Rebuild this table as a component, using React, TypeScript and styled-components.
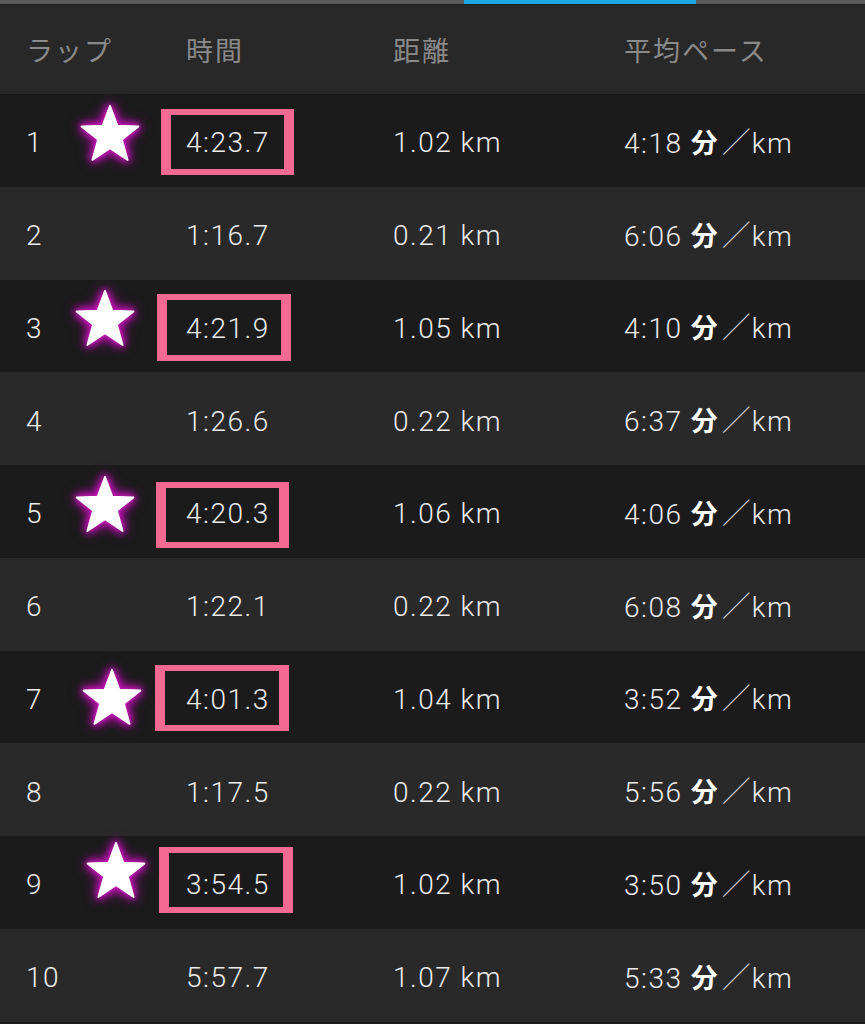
import React from "react";
import styled, { createGlobalStyle } from "styled-components";

const GlobalStyle = createGlobalStyle`
  body {
    margin: 0;
    background: #1b1b1b;
    font-family: Roboto, "Noto Sans CJK JP", sans-serif;
  }
`;

type Mark = {
  starX: number;
  starY: number;
  boxX: number;
  boxY: number;
  boxW: number;
  boxH: number;
};

type Lap = {
  lap: number;
  time: string;
  distance: string;
  pace: string;
  mark?: Mark;
};

const laps: Lap[] = [
  { lap: 1, time: "4:23.7", distance: "1.02 km", pace: "4:18", mark: { starX: 80, starY: 10, boxX: 161, boxY: 15, boxW: 133, boxH: 66 } },
  { lap: 2, time: "1:16.7", distance: "0.21 km", pace: "6:06" },
  { lap: 3, time: "4:21.9", distance: "1.05 km", pace: "4:10", mark: { starX: 75, starY: 9, boxX: 157, boxY: 14, boxW: 134, boxH: 67 } },
  { lap: 4, time: "1:26.6", distance: "0.22 km", pace: "6:37" },
  { lap: 5, time: "4:20.3", distance: "1.06 km", pace: "4:06", mark: { starX: 75, starY: 10, boxX: 156, boxY: 17, boxW: 133, boxH: 66 } },
  { lap: 6, time: "1:22.1", distance: "0.22 km", pace: "6:08" },
  { lap: 7, time: "4:01.3", distance: "1.04 km", pace: "3:52", mark: { starX: 82, starY: 17, boxX: 155, boxY: 14, boxW: 134, boxH: 66 } },
  { lap: 8, time: "1:17.5", distance: "0.22 km", pace: "5:56" },
  { lap: 9, time: "3:54.5", distance: "1.02 km", pace: "3:50", mark: { starX: 86, starY: 5, boxX: 159, boxY: 11, boxW: 134, boxH: 66 } },
  { lap: 10, time: "5:57.7", distance: "1.07 km", pace: "5:33" },
];

const Screen = styled.div`
  width: 865px;
  height: 1024px;
  overflow: hidden;
  background: #1b1b1b;
`;

const TabBar = styled.div`
  height: 4px;
  background: #5a5a5a;
  display: flex;
  border-bottom: 1px solid #1e1e1e;
`;

const ActiveTab = styled.div`
  margin-left: 464px;
  width: 232px;
  background: #1ba8e6;
`;

const Columns = styled.div`
  display: grid;
  grid-template-columns: 160px 207px 231px 1fr;
  padding-left: 26px;
  align-items: center;
`;

const HeaderRow = styled(Columns)`
  height: 89px;
  background: #282828;
`;

const HeaderCell = styled.div`
  font-family: "Noto Sans CJK JP", sans-serif;
  font-size: 27px;
  color: #8a8a8a;
  letter-spacing: 2px;
`;

const Row = styled(Columns)<{ $dark: boolean }>`
  position: relative;
  height: 92.75px;
  background: ${(p) => (p.$dark ? "#1b1b1b" : "#292929")};
`;

const Cell = styled.div`
  position: relative;
  z-index: 1;
  font-size: 28px;
  font-weight: 300;
  line-height: 33px;
  color: #ececec;
  letter-spacing: 1.5px;
  padding-top: 5px;
  white-space: nowrap;
`;

const Unit = styled.span`
  font-family: "Noto Sans CJK JP", sans-serif;
  font-weight: 700;
  color: #ffffff;
  font-size: 27px;
  line-height: 1;
  letter-spacing: 0;
`;

const Slash = styled.span`
  font-family: "Noto Sans CJK JP", sans-serif;
  font-weight: 300;
  color: #cfcfcf;
  font-size: 29px;
  line-height: 1;
  letter-spacing: 0;
  margin: 0 1px 0 4px;
`;

const StarMark = styled.svg`
  position: absolute;
  width: 60px;
  height: 58px;
  overflow: visible;
  filter: drop-shadow(0 0 3px #d21cc0) drop-shadow(0 0 4px #a4109a)
    drop-shadow(0 0 4px #8a0a86);
`;

const TimeBox = styled.div`
  position: absolute;
  box-sizing: border-box;
  border-style: solid;
  border-color: #f26a93;
  border-width: 6px 10px;
`;

const Star: React.FC<{ x: number; y: number }> = ({ x, y }) => (
  <StarMark viewBox="0 0 100 96" style={{ left: x, top: y }}>
    <polygon
      fill="#ffffff"
      stroke="#ffffff"
      strokeWidth="3"
      strokeLinejoin="round"
      points="50,2.6 62.3,35.6 97.5,37.2 70,59.1 79.4,93 50,73.6 20.6,93 30,59.1 2.5,37.2 37.7,35.6"
    />
  </StarMark>
);

const App: React.FC = () => (
  <Screen>
    <GlobalStyle />
    <TabBar>
      <ActiveTab />
    </TabBar>
    <HeaderRow>
      <HeaderCell>ラップ</HeaderCell>
      <HeaderCell>時間</HeaderCell>
      <HeaderCell>距離</HeaderCell>
      <HeaderCell>平均ペース</HeaderCell>
    </HeaderRow>
    {laps.map((l) => (
      <Row key={l.lap} $dark={l.lap % 2 === 1}>
        {l.mark && (
          <>
            <Star x={l.mark.starX} y={l.mark.starY} />
            <TimeBox
              style={{
                left: l.mark.boxX,
                top: l.mark.boxY,
                width: l.mark.boxW,
                height: l.mark.boxH,
              }}
            />
          </>
        )}
        <Cell>{l.lap}</Cell>
        <Cell>{l.time}</Cell>
        <Cell>{l.distance}</Cell>
        <Cell>
          {l.pace} <Unit>分</Unit>
          <Slash>／</Slash>km
        </Cell>
      </Row>
    ))}
  </Screen>
);

export default App;
